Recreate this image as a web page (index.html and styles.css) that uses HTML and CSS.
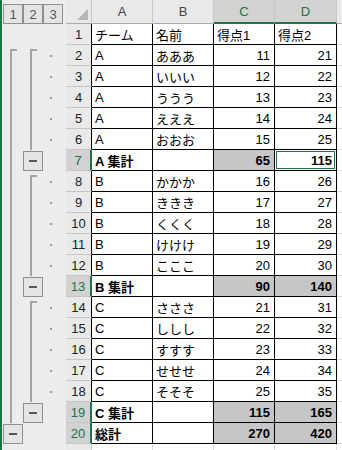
FILE: index.html
```html
<!DOCTYPE html>
<html lang="ja">
<head>
<meta charset="utf-8">
<title>Outline</title>
<link rel="stylesheet" href="styles.css">
</head>
<body>
<div class="app">
  <div class="edge"></div>
  <div class="outline">
    <div class="orow ohead"><div class="slot"><span class="lvl">1</span></div><div class="slot"><span class="lvl">2</span></div><div class="slot"><span class="lvl">3</span></div></div>
    <div class="orow"></div>
    <div class="orow"><div class="slot"><span class="vstart"></span></div><div class="slot"><span class="vstart"></span></div><div class="slot"><span class="dot"></span></div></div>
    <div class="orow"><div class="slot"><span class="vline"></span></div><div class="slot"><span class="vline"></span></div><div class="slot"><span class="dot"></span></div></div>
    <div class="orow"><div class="slot"><span class="vline"></span></div><div class="slot"><span class="vline"></span></div><div class="slot"><span class="dot"></span></div></div>
    <div class="orow"><div class="slot"><span class="vline"></span></div><div class="slot"><span class="vline"></span></div><div class="slot"><span class="dot"></span></div></div>
    <div class="orow"><div class="slot"><span class="vline"></span></div><div class="slot"><span class="vline"></span></div><div class="slot"><span class="dot"></span></div></div>
    <div class="orow"><div class="slot"><span class="vline"></span></div><div class="slot"><span class="mbtn"></span></div><div class="slot"></div></div>
    <div class="orow"><div class="slot"><span class="vline"></span></div><div class="slot"><span class="vstart"></span></div><div class="slot"><span class="dot"></span></div></div>
    <div class="orow"><div class="slot"><span class="vline"></span></div><div class="slot"><span class="vline"></span></div><div class="slot"><span class="dot"></span></div></div>
    <div class="orow"><div class="slot"><span class="vline"></span></div><div class="slot"><span class="vline"></span></div><div class="slot"><span class="dot"></span></div></div>
    <div class="orow"><div class="slot"><span class="vline"></span></div><div class="slot"><span class="vline"></span></div><div class="slot"><span class="dot"></span></div></div>
    <div class="orow"><div class="slot"><span class="vline"></span></div><div class="slot"><span class="vline"></span></div><div class="slot"><span class="dot"></span></div></div>
    <div class="orow"><div class="slot"><span class="vline"></span></div><div class="slot"><span class="mbtn"></span></div><div class="slot"></div></div>
    <div class="orow"><div class="slot"><span class="vline"></span></div><div class="slot"><span class="vstart"></span></div><div class="slot"><span class="dot"></span></div></div>
    <div class="orow"><div class="slot"><span class="vline"></span></div><div class="slot"><span class="vline"></span></div><div class="slot"><span class="dot"></span></div></div>
    <div class="orow"><div class="slot"><span class="vline"></span></div><div class="slot"><span class="vline"></span></div><div class="slot"><span class="dot"></span></div></div>
    <div class="orow"><div class="slot"><span class="vline"></span></div><div class="slot"><span class="vline"></span></div><div class="slot"><span class="dot"></span></div></div>
    <div class="orow"><div class="slot"><span class="vline"></span></div><div class="slot"><span class="vline"></span></div><div class="slot"><span class="dot"></span></div></div>
    <div class="orow"><div class="slot"><span class="vline"></span></div><div class="slot"><span class="mbtn"></span></div><div class="slot"></div></div>
    <div class="orow"><div class="slot"><span class="mbtn"></span></div><div class="slot"></div><div class="slot"></div></div>
    <div class="orow"></div>
  </div>
  <div class="sheet">
    <div class="ch corner"><span class="tri"></span></div><div class="ch">A</div><div class="ch">B</div><div class="ch sel">C</div><div class="ch sel">D</div><div class="ch ce"></div>

    <div class="rh">1</div><div class="c">チーム</div><div class="c">名前</div><div class="c">得点1</div><div class="c">得点2</div><div class="e"></div>
    <div class="rh">2</div><div class="c">A</div><div class="c">あああ</div><div class="c n">11</div><div class="c n">21</div><div class="e"></div>
    <div class="rh">3</div><div class="c">A</div><div class="c">いいい</div><div class="c n">12</div><div class="c n">22</div><div class="e"></div>
    <div class="rh">4</div><div class="c">A</div><div class="c">ううう</div><div class="c n">13</div><div class="c n">23</div><div class="e"></div>
    <div class="rh">5</div><div class="c">A</div><div class="c">えええ</div><div class="c n">14</div><div class="c n">24</div><div class="e"></div>
    <div class="rh">6</div><div class="c">A</div><div class="c">おおお</div><div class="c n">15</div><div class="c n">25</div><div class="e"></div>
    <div class="rh sel">7</div><div class="c b">A 集計</div><div class="c"></div><div class="c n b g">65</div><div class="c n b act">115</div><div class="e"></div>
    <div class="rh">8</div><div class="c">B</div><div class="c">かかか</div><div class="c n">16</div><div class="c n">26</div><div class="e"></div>
    <div class="rh">9</div><div class="c">B</div><div class="c">ききき</div><div class="c n">17</div><div class="c n">27</div><div class="e"></div>
    <div class="rh">10</div><div class="c">B</div><div class="c">くくく</div><div class="c n">18</div><div class="c n">28</div><div class="e"></div>
    <div class="rh">11</div><div class="c">B</div><div class="c">けけけ</div><div class="c n">19</div><div class="c n">29</div><div class="e"></div>
    <div class="rh">12</div><div class="c">B</div><div class="c">こここ</div><div class="c n">20</div><div class="c n">30</div><div class="e"></div>
    <div class="rh sel">13</div><div class="c b">B 集計</div><div class="c"></div><div class="c n b g">90</div><div class="c n b g">140</div><div class="e"></div>
    <div class="rh">14</div><div class="c">C</div><div class="c">さささ</div><div class="c n">21</div><div class="c n">31</div><div class="e"></div>
    <div class="rh">15</div><div class="c">C</div><div class="c">ししし</div><div class="c n">22</div><div class="c n">32</div><div class="e"></div>
    <div class="rh">16</div><div class="c">C</div><div class="c">すすす</div><div class="c n">23</div><div class="c n">33</div><div class="e"></div>
    <div class="rh">17</div><div class="c">C</div><div class="c">せせせ</div><div class="c n">24</div><div class="c n">34</div><div class="e"></div>
    <div class="rh">18</div><div class="c">C</div><div class="c">そそそ</div><div class="c n">25</div><div class="c n">35</div><div class="e"></div>
    <div class="rh sel">19</div><div class="c b">C 集計</div><div class="c"></div><div class="c n b g">115</div><div class="c n b g">165</div><div class="e"></div>
    <div class="rh sel">20</div><div class="c b">総計</div><div class="c"></div><div class="c n b g">270</div><div class="c n b g">420</div><div class="e"></div>
    <div class="rh blank-h"></div><div class="blank"></div><div class="blank"></div><div class="blank"></div><div class="blank"></div><div class="e"></div>
  </div>
</div>
</body>
</html>
```

FILE: styles.css
```css
* { box-sizing: border-box; }
html, body { margin: 0; padding: 0; background: #fff; }
body { overflow: hidden; }

.app {
  display: flex;
  width: 342px;
  height: 450px;
  overflow: hidden;
  background: #fff;
  font-family: "Liberation Sans", "Noto Sans CJK JP", sans-serif;
  font-size: 13px;
  color: #000;
}

.edge { width: 2px; flex: none; background: #217346; }

.outline {
  width: 64px;
  flex: none;
  background: #ececec;
  display: grid;
  grid-template-rows: 24px repeat(21, 21px);
  padding-left: 1px;
}
.orow { display: flex; }
.slot { width: 20px; flex: none; display: flex; }
.ohead .slot { align-items: flex-end; }

.lvl {
  width: 20px;
  height: 20px;
  border: 1px solid #8e8e8e;
  background: #e4e4e4;
  color: #555;
  font-size: 13px;
  display: flex;
  align-items: center;
  justify-content: center;
}

.vline { margin-left: 7px; width: 2px; background: #a3a3a3; }
.vstart {
  margin-left: 7px;
  margin-top: 4px;
  width: 7px;
  border-left: 2px solid #a3a3a3;
  border-top: 2px solid #a3a3a3;
}
.mbtn {
  margin-top: 1px;
  width: 20px;
  height: 20px;
  border: 1px solid #8e8e8e;
  background: #e4e4e4;
  display: flex;
  align-items: center;
  justify-content: center;
}
.mbtn::before { content: ""; width: 8px; height: 2px; background: #555; }
.dot { width: 2px; height: 2px; background: #9a9a9a; margin-left: 7px; align-self: center; }

.sheet {
  flex: 1;
  display: grid;
  grid-template-columns: 26px 61px 61px 61px 62px 1fr;
  grid-template-rows: 24px repeat(21, 21px);
}

.ch {
  background: #e9e9e9;
  border-right: 1px solid #c6c6c6;
  border-bottom: 1px solid #ababab;
  display: flex;
  align-items: center;
  justify-content: center;
  color: #444;
}
.ch.sel { background: #d2d2d2; border-bottom: 2px solid #217346; color: #217346; }
.ch.ce { border-right: none; }
.corner { justify-content: flex-end; align-items: flex-end; padding: 0 3px 3px 0; }
.tri { width: 0; height: 0; border-left: 11px solid transparent; border-bottom: 11px solid #b5b5b5; }

.rh {
  background: #e9e9e9;
  border-right: 1px solid #000;
  border-bottom: 1px solid #c6c6c6;
  display: flex;
  align-items: center;
  justify-content: center;
  color: #222;
}
.rh.sel { background: #d2d2d2; color: #217346; border-right: 2px solid #217346; }
.rh.blank-h { border-right: 1px solid #c6c6c6; }

.c {
  border-right: 1px solid #000;
  border-bottom: 1px solid #000;
  display: flex;
  align-items: center;
  padding: 0 3px;
  white-space: nowrap;
  overflow: hidden;
}
.n { justify-content: flex-end; padding-right: 4px; }
.b { font-weight: bold; }
.g { background: #c6c6c6; }
.act { box-shadow: inset 0 0 0 1px #fff, inset 0 0 0 2px #217346; }

.e { border-bottom: 1px solid #dadada; }
.blank { border-right: 1px solid #dadada; }
```
